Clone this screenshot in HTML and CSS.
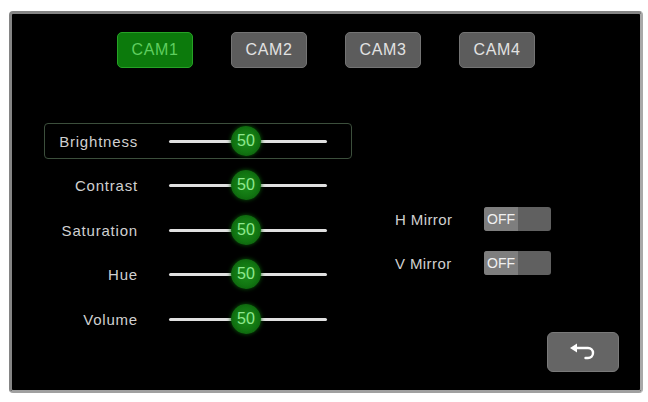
FILE: index.html
```html
<!DOCTYPE html>
<html>
<head>
<meta charset="utf-8">
<link rel="stylesheet" href="styles.css">
</head>
<body>
<div class="panel">
  <div class="cams">
    <div class="cam active">CAM1</div>
    <div class="cam">CAM2</div>
    <div class="cam">CAM3</div>
    <div class="cam">CAM4</div>
  </div>
  <div class="main">
    <div class="sliders">
      <div class="row selected"><span class="label">Brightness</span><div class="track"><span class="knob">50</span></div></div>
      <div class="row"><span class="label">Contrast</span><div class="track"><span class="knob">50</span></div></div>
      <div class="row"><span class="label">Saturation</span><div class="track"><span class="knob">50</span></div></div>
      <div class="row"><span class="label">Hue</span><div class="track"><span class="knob">50</span></div></div>
      <div class="row"><span class="label">Volume</span><div class="track"><span class="knob">50</span></div></div>
    </div>
    <div class="side">
      <div class="mirrors">
        <div class="mrow"><span class="mlabel">H Mirror</span><div class="toggle"><span class="off">OFF</span><span class="rest"></span></div></div>
        <div class="mrow"><span class="mlabel">V Mirror</span><div class="toggle"><span class="off">OFF</span><span class="rest"></span></div></div>
      </div>
      <div class="back">
        <svg width="28" height="20" viewBox="0 0 28 20">
          <path d="M1 6 L8 1.5 L8 10.5 Z" fill="#fff"/>
          <path d="M7 6 H19 A5 5 0 0 1 19 16 H16.5" fill="none" stroke="#fff" stroke-width="2.4" stroke-linecap="round"/>
        </svg>
      </div>
    </div>
  </div>
</div>
</body>
</html>
```

FILE: styles.css
```css
* { box-sizing: border-box; }
html, body { margin: 0; padding: 0; background: #fff; }
body { width: 648px; height: 402px; padding: 11px 5px 9px 9px; font-family: "Liberation Sans", Arial, sans-serif; }

.panel {
  width: 634px;
  height: 382px;
  background: #000;
  border: 3px solid #858585;
  border-right-color: #a8a8a8;
  border-bottom-color: #a0a0a0;
  border-radius: 4px;
  display: flex;
  flex-direction: column;
  padding: 18px 21px 18px 32px;
}

.cams { display: flex; gap: 38px; padding-left: 73px; }
.cam {
  width: 76px; height: 36px;
  border-radius: 5px;
  background: #5c5c5c;
  border: 1px solid #747474;
  color: #e2e2e2;
  font-size: 16px;
  letter-spacing: 0.6px;
  display: flex; align-items: center; justify-content: center;
}
.cam.active { background: #0c7a0c; border-color: #26a226; color: #5fce5f; }

.main { display: flex; margin-top: 55px; flex: 1; }

.sliders { display: flex; flex-direction: column; gap: 8.5px; width: 308px; }
.row {
  height: 36px;
  display: flex; align-items: center;
  border: 1px solid transparent;
  border-radius: 4px;
  color: #d0d0d0;
  font-size: 15px;
  letter-spacing: 0.8px;
}
.row.selected { border-color: #3c4f3c; }
.label { width: 93px; text-align: right; }
.track {
  margin-left: 31px;
  width: 158px; height: 3px;
  background: #e0e0e0;
  border-radius: 2px;
  position: relative;
}
.knob {
  position: absolute;
  left: 62px; top: -14px;
  width: 30px; height: 30px;
  border-radius: 50%;
  background: radial-gradient(circle at 50% 50%, #1c8e1c 0%, #117511 55%, #0a4f0a 100%);
  box-shadow: 0 0 4px #0a5a0a;
  color: #8fe88f;
  font-size: 16px;
  letter-spacing: 0;
  display: flex; align-items: center; justify-content: center;
}

.side { flex: 1; margin-left: 43px; display: flex; flex-direction: column; }
.mirrors { display: flex; flex-direction: column; gap: 20px; margin-top: 84px; }
.mrow { display: flex; align-items: center; height: 24px; }
.mlabel { width: 89px; color: #d0d0d0; font-size: 15px; letter-spacing: 0.4px; }
.toggle { display: flex; width: 67px; height: 24px; border-radius: 3px; overflow: hidden; background: #606060; }
.off {
  width: 34px; background: #7e7e7e; color: #f0f0f0;
  font-size: 14px; display: flex; align-items: center; justify-content: center;
}
.rest { flex: 1; }

.back {
  margin-top: auto; align-self: flex-end;
  width: 72px; height: 40px;
  border-radius: 6px;
  background: #656565;
  border: 1px solid #7a7a7a;
  display: flex; align-items: center; justify-content: center;
}
```
